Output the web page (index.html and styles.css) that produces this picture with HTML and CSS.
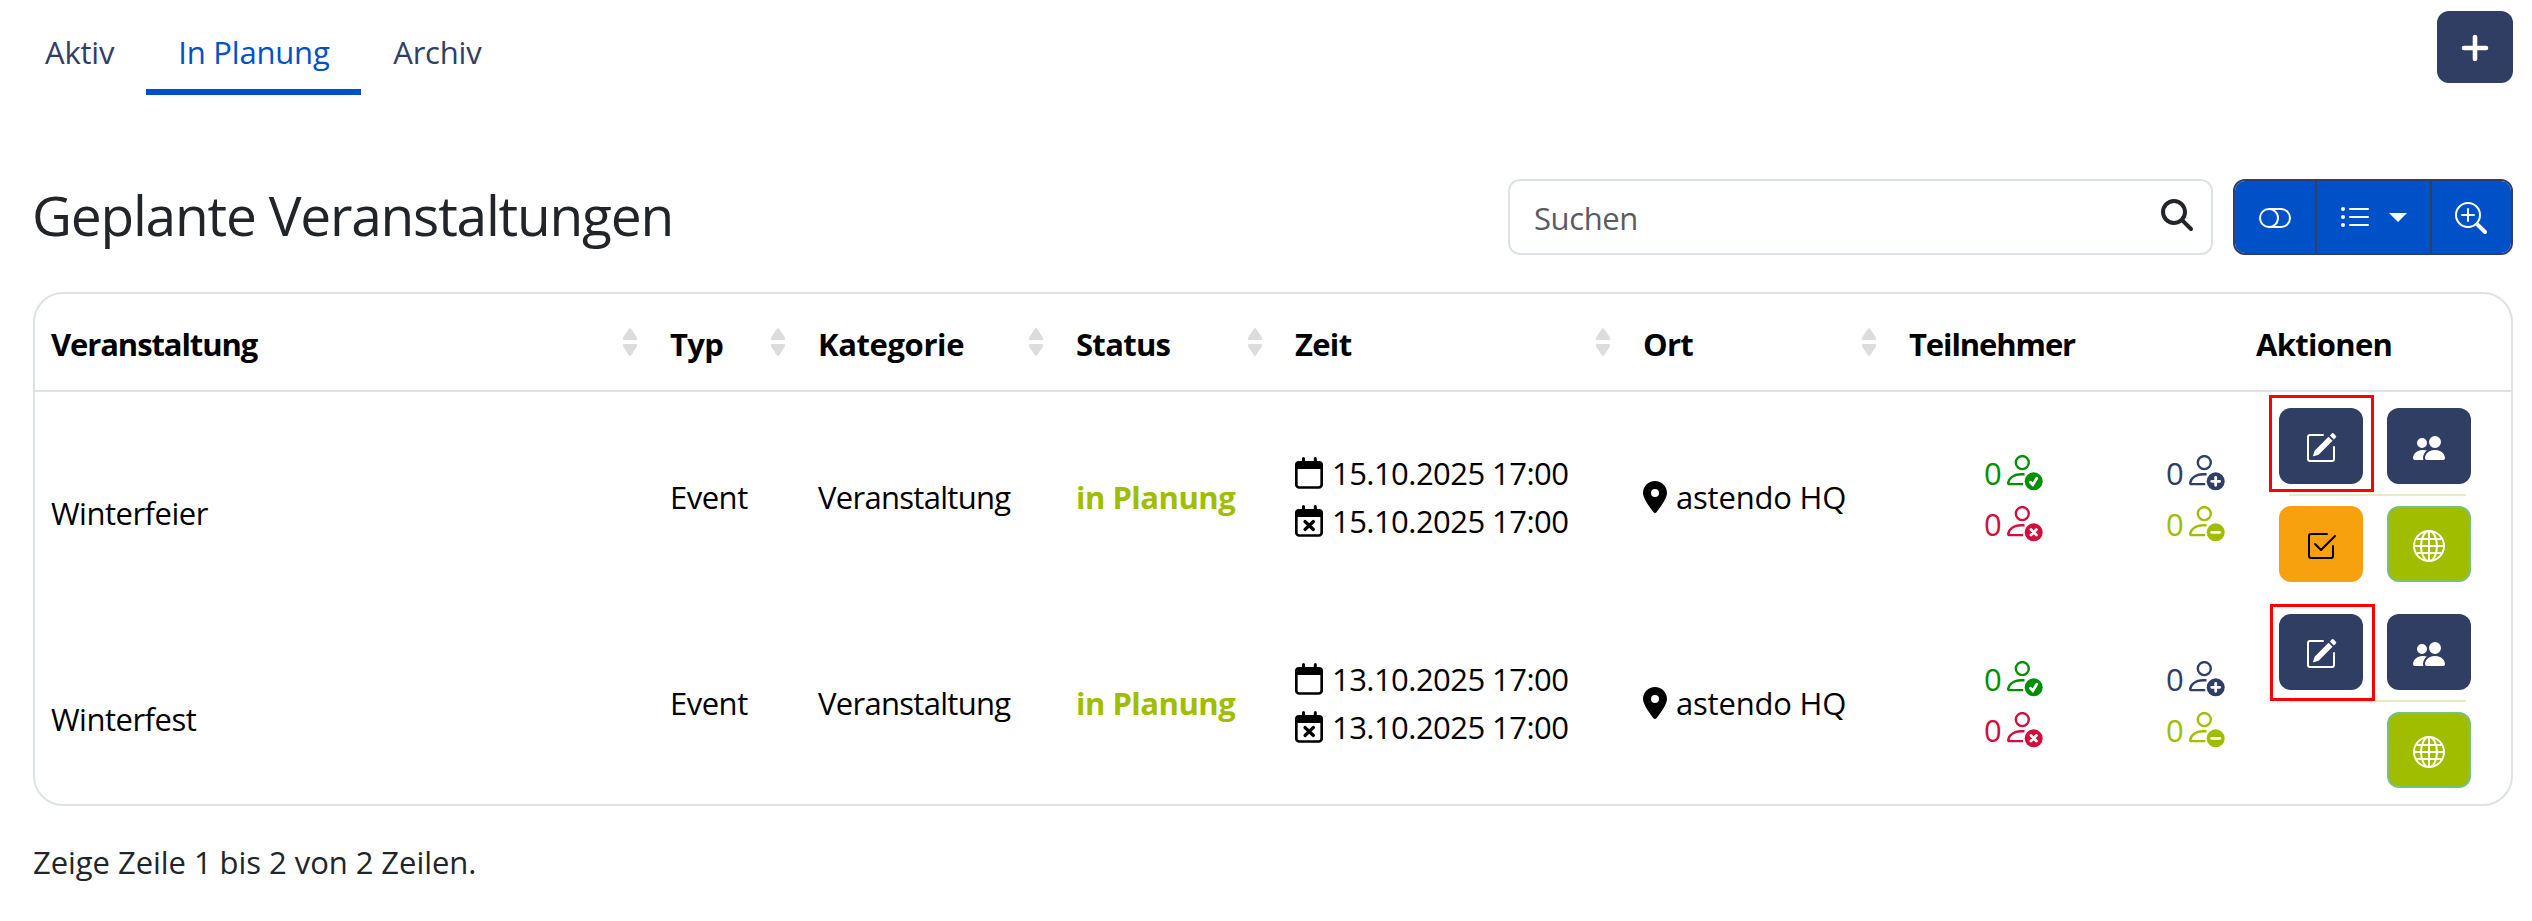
FILE: index.html
```html
<!DOCTYPE html>
<html lang="de">
<head>
  <meta charset="UTF-8" />
  <meta name="viewport" content="width=device-width, initial-scale=1.0"/>
  <title>Geplante Veranstaltungen</title>
  <link rel="stylesheet" href="styles.css">
</head>
<body>
  <!-- icon sprite -->
  <svg class="sprite" xmlns="http://www.w3.org/2000/svg">
    <symbol id="plus" viewBox="0 0 28 28"><path d="M14 3v22M3 14h22" fill="none" stroke="currentColor" stroke-width="4.6" stroke-linecap="round"/></symbol>
    <symbol id="search" viewBox="0 0 512 512"><path d="M416 208c0 45.900-14.900 88.300-40 122.700L502.600 457.400c12.500 12.500 12.500 32.800 0 45.300s-32.800 12.500-45.300 0L330.700 376c-34.400 25.200-76.800 40-122.700 40C93.100 416 0 322.900 0 208S93.100 0 208 0S416 93.100 416 208zM208 352a144 144 0 1 0 0-288 144 144 0 1 0 0 288z"/></symbol>
    <symbol id="toggle" viewBox="0 0 16 16"><path d="M11 4a4 4 0 0 1 0 8H8a5 5 0 0 0 2-4 5 5 0 0 0-2-4zm-6 8a4 4 0 1 1 0-8 4 4 0 0 1 0 8M0 8a5 5 0 0 0 5 5h6a5 5 0 0 0 0-10H5a5 5 0 0 0-5 5"/></symbol>
    <symbol id="list" viewBox="0 0 16 16"><path d="M5.500 3.500h9a.5.5 0 0 1 0 1h-9a.5.5 0 0 1 0-1m0 4h9a.5.5 0 0 1 0 1h-9a.5.5 0 0 1 0-1m0 4h9a.5.5 0 0 1 0 1h-9a.5.5 0 0 1 0-1"/><circle cx="2" cy="4" r="1"/><circle cx="2" cy="8" r="1"/><circle cx="2" cy="12" r="1"/></symbol>
    <symbol id="zoom-in" viewBox="0 0 16 16"><path fill-rule="evenodd" d="M6.500 12a5.500 5.500 0 1 0 0-11 5.500 5.500 0 0 0 0 11M13 6.500a6.500 6.500 0 1 1-13 0 6.500 6.500 0 0 1 13 0"/><path d="M10.344 11.742q.044.06.098.115l3.850 3.850a1 1 0 0 0 1.415-1.414l-3.850-3.850a1 1 0 0 0-.115-.1 6.500 6.500 0 0 1-1.398 1.400z"/><path fill-rule="evenodd" d="M6.500 3a.5.5 0 0 1 .5.5V6h2.500a.5.5 0 0 1 0 1H7v2.500a.5.5 0 0 1-1 0V7H3.500a.5.5 0 0 1 0-1H6V3.500a.5.5 0 0 1 .5-.5"/></symbol>
    <symbol id="edit" viewBox="0 0 16 16"><path d="M15.502 1.940a.5.5 0 0 1 0 .706L14.459 3.690l-2-2L13.502.646a.5.5 0 0 1 .707 0l1.293 1.293zm-1.750 2.456-2-2L4.939 9.210a.5.5 0 0 0-.121.196l-.805 2.414a.25.25 0 0 0 .316.316l2.414-.805a.5.5 0 0 0 .196-.12z"/><path fill-rule="evenodd" d="M1 13.500A1.500 1.500 0 0 0 2.500 15h11a1.500 1.500 0 0 0 1.500-1.500v-6a.5.5 0 0 0-1 0v6a.5.5 0 0 1-.5.5h-11a.5.5 0 0 1-.5-.5v-11a.5.5 0 0 1 .5-.5H9a.5.5 0 0 0 0-1H2.500A1.500 1.500 0 0 0 1 2.500z"/></symbol>
    <symbol id="people" viewBox="0 0 16 16"><path d="M7 14s-1 0-1-1 1-4 5-4 5 3 5 4-1 1-1 1zm4-6a3 3 0 1 0 0-6 3 3 0 0 0 0 6m-5.784 6A2.240 2.240 0 0 1 5 13c0-1.355.68-2.750 1.936-3.720A6.300 6.300 0 0 0 5 9c-4 0-5 3-5 4s1 1 1 1zM4.500 8a2.500 2.500 0 1 0 0-5 2.500 2.500 0 0 0 0 5"/></symbol>
    <symbol id="check" viewBox="0 0 16 16"><path d="M3 14.500A1.500 1.500 0 0 1 1.500 13V3A1.500 1.500 0 0 1 3 1.500h8a.5.5 0 0 1 0 1H3a.5.5 0 0 0-.5.5v10a.5.5 0 0 0 .5.5h10a.5.5 0 0 0 .5-.5V8a.5.5 0 0 1 1 0v5a1.500 1.500 0 0 1-1.500 1.500z"/><path d="m8.354 10.354 7-7a.5.5 0 0 0-.708-.708L8 9.293 5.354 6.646a.5.5 0 1 0-.708.708l3 3a.5.5 0 0 0 .708 0"/></symbol>
    <symbol id="globe" viewBox="0 0 32 32"><g fill="none" stroke="currentColor" stroke-width="2"><circle cx="16" cy="16" r="15"/><ellipse cx="16" cy="16" rx="8" ry="15"/><path d="M16 1v30M1 16h30M4 9h24M4 23h24"/></g></symbol>
    <symbol id="calendar" viewBox="0 0 28 32"><path d="M1.300 8.500v19a3 3 0 0 0 3 3h19.400a3 3 0 0 0 3-3v-19" fill="none" stroke="currentColor" stroke-width="2.700"/><path d="M0 12V8a4 4 0 0 1 4-4h20a4 4 0 0 1 4 4v4z"/><path d="M8.500 1.500v4M20.300 1.500v4" stroke="currentColor" stroke-width="3" stroke-linecap="round"/></symbol>
    <symbol id="calendar-x" viewBox="0 0 28 32"><use href="#calendar"/><path d="M10 16.500l8.400 8M18.400 16.500l-8.400 8" stroke="currentColor" stroke-width="3.200" stroke-linecap="round"/></symbol>
    <symbol id="pin" viewBox="0 0 384 512"><path d="M215.700 499.200C267 435 384 279.400 384 192C384 86 298 0 192 0S0 86 0 192c0 87.400 117 243 168.300 307.200c12.300 15.300 35.100 15.300 47.400 0zM192 128a64 64 0 1 1 0 128 64 64 0 1 1 0-128z"/></symbol>
    <symbol id="sort" viewBox="0 0 16 28"><path d="M6.900.8q1.100-1.500 2.200 0l5.500 8.200q1.400 3-.8 3H2.200q-2.200 0-.8-3zM6.900 27.200q1.100 1.500 2.200 0l5.500-8.200q1.400-3-.8-3H2.200q-2.200 0-.8 3z"/></symbol>
    <symbol id="person" viewBox="0 0 36 36"><g fill="none" stroke="currentColor" stroke-width="2.400"><circle cx="15.300" cy="7.600" r="6.500"/><path d="M17.500 19.200H14C6.500 19.200 1.800 23.500 1.200 28q-.1 1.100 1.300 1.100h13.700"/></g><circle cx="26.700" cy="26.300" r="9"/></symbol>
    <symbol id="person-check" viewBox="0 0 36 36"><use href="#person"/><path class="sign" d="M23.500 27.300l2.300 2.400 4-6.500"/></symbol>
    <symbol id="person-x" viewBox="0 0 36 36"><use href="#person"/><path class="sign" d="M24 23.600l5.400 5.400M29.400 23.600L24 29"/></symbol>
    <symbol id="person-plus" viewBox="0 0 36 36"><use href="#person"/><path class="sign" d="M26.700 22.300v8M22.700 26.300h8"/></symbol>
    <symbol id="person-minus" viewBox="0 0 36 36"><use href="#person"/><path class="sign" d="M22.700 26.300h8"/></symbol>
  </svg>

  <header class="topbar">
    <nav class="tabs">
      <a class="tab">Aktiv</a>
      <a class="tab active">In Planung</a>
      <a class="tab">Archiv</a>
    </nav>
    <button class="btn btn-add"><svg class="icon-plus"><use href="#plus"/></svg></button>
  </header>

  <main class="content">
    <div class="toolbar">
      <h1 class="page-title">Geplante Veranstaltungen</h1>
      <div class="search">
        <input type="text" class="search-input" placeholder="Suchen">
        <svg class="icon"><use href="#search"/></svg>
      </div>
      <div class="btn-group">
        <button class="group-btn"><svg class="icon"><use href="#toggle"/></svg></button>
        <button class="group-btn dropdown"><svg class="icon"><use href="#list"/></svg><span class="caret"></span></button>
        <button class="group-btn"><svg class="icon"><use href="#zoom-in"/></svg></button>
      </div>
    </div>

    <div class="table-card">
      <table class="events">
        <colgroup>
          <col class="w-name"><col class="w-type"><col class="w-category"><col class="w-status">
          <col class="w-time"><col class="w-place"><col class="w-people"><col class="w-actions">
        </colgroup>
        <thead>
          <tr>
            <th><div class="head tight">Veranstaltung<svg class="sort"><use href="#sort"/></svg></div></th>
            <th><div class="head">Typ<svg class="sort"><use href="#sort"/></svg></div></th>
            <th><div class="head wide">Kategorie<svg class="sort"><use href="#sort"/></svg></div></th>
            <th><div class="head">Status<svg class="sort"><use href="#sort"/></svg></div></th>
            <th><div class="head">Zeit<svg class="sort"><use href="#sort"/></svg></div></th>
            <th><div class="head">Ort<svg class="sort"><use href="#sort"/></svg></div></th>
            <th><div class="head tight">Teilnehmer</div></th>
            <th><div class="head">Aktionen</div></th>
          </tr>
        </thead>
        <tbody>
          <tr>
            <td class="name">Winterfeier</td>
            <td>Event</td>
            <td class="category">Veranstaltung</td>
            <td class="status">in Planung</td>
            <td class="time">
              <div class="line"><svg class="icon-cal"><use href="#calendar"/></svg>15.10.2025 17:00</div>
              <div class="line"><svg class="icon-cal"><use href="#calendar-x"/></svg>15.10.2025 17:00</div>
            </td>
            <td class="place"><div class="line"><svg class="icon-pin"><use href="#pin"/></svg>astendo HQ</div></td>
            <td class="people">
              <div class="counts">
                <span class="count green">0<svg class="icon-person"><use href="#person-check"/></svg></span>
                <span class="count navy">0<svg class="icon-person"><use href="#person-plus"/></svg></span>
                <span class="count red">0<svg class="icon-person"><use href="#person-x"/></svg></span>
                <span class="count lime">0<svg class="icon-person"><use href="#person-minus"/></svg></span>
              </div>
            </td>
            <td class="actions">
              <div class="action-row">
                <button class="btn marked"><svg class="icon"><use href="#edit"/></svg></button>
                <button class="btn"><svg class="icon"><use href="#people"/></svg></button>
              </div>
              <hr class="divider">
              <div class="action-row">
                <button class="btn btn-orange"><svg class="icon"><use href="#check"/></svg></button>
                <button class="btn btn-lime"><svg class="icon"><use href="#globe"/></svg></button>
              </div>
            </td>
          </tr>
          <tr>
            <td class="name">Winterfest</td>
            <td>Event</td>
            <td class="category">Veranstaltung</td>
            <td class="status">in Planung</td>
            <td class="time">
              <div class="line"><svg class="icon-cal"><use href="#calendar"/></svg>13.10.2025 17:00</div>
              <div class="line"><svg class="icon-cal"><use href="#calendar-x"/></svg>13.10.2025 17:00</div>
            </td>
            <td class="place"><div class="line"><svg class="icon-pin"><use href="#pin"/></svg>astendo HQ</div></td>
            <td class="people">
              <div class="counts">
                <span class="count green">0<svg class="icon-person"><use href="#person-check"/></svg></span>
                <span class="count navy">0<svg class="icon-person"><use href="#person-plus"/></svg></span>
                <span class="count red">0<svg class="icon-person"><use href="#person-x"/></svg></span>
                <span class="count lime">0<svg class="icon-person"><use href="#person-minus"/></svg></span>
              </div>
            </td>
            <td class="actions">
              <div class="action-row">
                <button class="btn marked marked-low"><svg class="icon"><use href="#edit"/></svg></button>
                <button class="btn"><svg class="icon"><use href="#people"/></svg></button>
              </div>
              <hr class="divider">
              <div class="action-row">
                <button class="btn btn-lime"><svg class="icon"><use href="#globe"/></svg></button>
              </div>
            </td>
          </tr>
        </tbody>
      </table>
    </div>

    <p class="table-info">Zeige Zeile 1 bis 2 von 2 Zeilen.</p>
  </main>
</body>
</html>
```
FILE: styles.css
```css
*,
*::after {
  box-sizing: border-box;
}

body {
  margin: 0;
  font-family: "Open Sans", "Noto Sans", sans-serif;
  font-size: 31px;
  line-height: 48px;
  color: #212529;
  background-color: #fff;
}

button {
  font: inherit;
  cursor: pointer;
}

svg {
  display: block;
  flex: none;
  fill: currentColor;
}

.sprite {
  display: none;
}

.icon {
  width: 32px;
  height: 32px;
}

/* tabs */
.topbar {
  display: flex;
  justify-content: space-between;
  align-items: flex-start;
  height: 95px;
  padding: 0 19px 0 13px;
}

.tabs {
  display: flex;
}

.tab {
  height: 95px;
  padding: 28px 32px 13px;
  color: #303e64;
  letter-spacing: -0.2px;
  white-space: nowrap;
  border-bottom: 6px solid transparent;
}

.tab.active {
  width: 215px;
  color: #0050c8;
  border-bottom-color: #0050c8;
}

.btn {
  display: flex;
  justify-content: center;
  align-items: center;
  width: 84px;
  height: 76px;
  padding: 4px 0 0;
  color: #fff;
  background-color: #303e64;
  border: none;
  border-radius: 12px;
}

.btn-add {
  width: 76px;
  height: 72px;
  margin-top: 11px;
  padding-top: 2px;
}

.icon-plus {
  width: 28px;
  height: 28px;
}

/* title, search and view buttons */
.content {
  padding: 84px 19px 0 33px;
}

.toolbar {
  display: flex;
  align-items: center;
  height: 76px;
}

.page-title {
  margin: 0 auto 0 -1px;
  padding: 0 0 5px;
  font-size: 55px;
  font-weight: 400;
  line-height: 67px;
  letter-spacing: -1.2px;
}

.search {
  display: flex;
  align-items: center;
  width: 705px;
  height: 76px;
  padding: 0 18px 0 24px;
  border: 2px solid #dee2e6;
  border-radius: 12px;
}

.search .icon {
  margin-bottom: 4px;
}

.search-input {
  flex: 1;
  min-width: 0;
  padding: 1px 0 0;
  font: inherit;
  letter-spacing: -0.4px;
  border: none;
  outline: none;
  background: none;
}

.search-input::placeholder {
  color: #595c5f;
  opacity: 1;
}

.btn-group {
  display: flex;
  width: 280px;
  height: 76px;
  margin-left: 20px;
  border: 2px solid #303e64;
  border-radius: 12px;
  overflow: hidden;
}

.group-btn {
  flex: 1;
  display: flex;
  justify-content: center;
  align-items: center;
  padding: 2px 0 0;
  color: #fff;
  background-color: #0050c8;
  border: none;
}

.group-btn + .group-btn {
  border-left: 2px solid #303e64;
}

.group-btn.dropdown {
  flex: 0 0 115px;
  gap: 18px;
  padding-top: 0;
}

.caret {
  border-top: 9px solid #fff;
  border-left: 9px solid transparent;
  border-right: 9px solid transparent;
}

/* events table */
.table-card {
  margin-top: 37px;
  border: 2px solid #dee2e6;
  border-radius: 30px;
  overflow: hidden;
}

.events {
  width: 100%;
  table-layout: fixed;
  border-collapse: separate;
  border-spacing: 0;
  color: #000;
}

.w-name { width: 619px; }
.w-type { width: 148px; }
.w-category { width: 258px; }
.w-status { width: 219px; }
.w-time { width: 348px; }
.w-place { width: 266px; }
.w-people { width: 347px; }
.w-actions { width: 271px; }

.events th {
  padding: 26px 16px 22px;
  text-align: left;
  font-weight: 700;
  border-bottom: 2px solid #dee2e6;
}

.head {
  display: flex;
  justify-content: space-between;
  letter-spacing: -0.7px;
}

.head.tight {
  letter-spacing: -1.1px;
}

.head.wide {
  letter-spacing: -0.4px;
}

.sort {
  width: 16px;
  height: 28px;
  margin-top: 8px;
  color: #dcdcdc;
}

.events td {
  height: 206px;
  padding: 4px 16px 0;
  vertical-align: middle;
  letter-spacing: -0.5px;
}

.events td.name {
  padding-top: 36px;
}

.events td.category {
  letter-spacing: -0.7px;
}

.events td.status {
  font-weight: 700;
  color: #a0bd00;
}

.events td.time {
  letter-spacing: -0.55px;
}

.events td.place {
  letter-spacing: -0.2px;
}

.line {
  display: flex;
  white-space: nowrap;
}

.icon-cal {
  width: 28px;
  height: 32px;
  margin: 8px 9px 0 0;
}

.icon-pin {
  width: 24px;
  height: 32px;
  margin: 8px 9px 0 0;
}

.events td.people {
  padding: 10px 0 0 91px;
}

.counts {
  display: grid;
  grid-template-columns: 182px 1fr;
  grid-auto-rows: 51px;
}

.count {
  display: flex;
}

.icon-person {
  width: 36px;
  height: 36px;
  margin: 6px 0 0 6px;
}

.sign {
  fill: none;
  stroke: #fff;
  stroke-width: 2.8px;
  stroke-linecap: round;
}

.green { color: #008f00; }
.red { color: #d0103a; }
.navy { color: #303e64; }
.lime { color: #a0bd00; }

.events td.actions {
  padding: 16px 40px 16px 39px;
}

.action-row {
  display: flex;
  justify-content: flex-end;
  gap: 24px;
}

.divider {
  width: 177px;
  height: 2px;
  margin: 10px 0 10px 10px;
  border: none;
  background-color: #e6edc0;
}

.btn-orange {
  color: #000;
  background-color: #f7a10f;
}

.btn-lime {
  background-color: #a0bd00;
  border: 2px solid #78c178;
}

/* red frame around the edit button */
.marked {
  position: relative;
}

.marked::after {
  content: "";
  position: absolute;
  top: -13px;
  left: -10px;
  width: 105px;
  height: 97px;
  border: 3px solid #f00;
}

.marked-low::after {
  top: -10px;
  left: -9px;
}

.table-info {
  margin: 32px 0 0;
  letter-spacing: -0.05px;
}
```
